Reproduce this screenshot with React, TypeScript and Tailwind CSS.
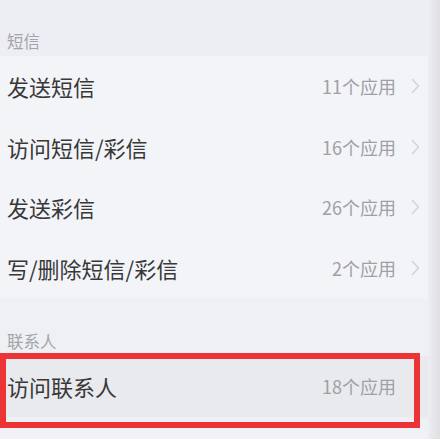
import React from 'react';

interface PermRow {
  label: string;
  count: number;
  arrow?: boolean;
}

const smsRows: PermRow[] = [
  { label: '发送短信', count: 11, arrow: true },
  { label: '访问短信/彩信', count: 16, arrow: true },
  { label: '发送彩信', count: 26, arrow: true },
  { label: '写/删除短信/彩信', count: 2, arrow: true },
];

const font = { fontFamily: '"Noto Sans CJK SC", "Noto Sans", sans-serif' };

function Chevron() {
  return (
    <svg width="9" height="16" viewBox="0 0 9 16" className="ml-[15px] shrink-0">
      <path d="M1.5 1.5 L7.5 8 L1.5 14.5" fill="none" stroke="#d3d4d8" strokeWidth="1.6" strokeLinecap="round" strokeLinejoin="round" />
    </svg>
  );
}

function Row({ row, className = '' }: { row: PermRow; className?: string }) {
  return (
    <div className={`flex h-[60.5px] items-center pl-[7px] pr-[8px] ${className}`}>
      <span className="flex-1 text-[22px] leading-none text-[#383838]">{row.label}</span>
      <span className="text-[18px] leading-none text-[#a0a0a4]">{row.count}个应用</span>
      {row.arrow ? <Chevron /> : <span className="ml-[15px] w-[9px]" />}
    </div>
  );
}

function SectionHeader({ title, h }: { title: string; h: string }) {
  return (
    <div className={`flex items-end pl-[7px] pb-[7px] ${h}`}>
      <span className="text-[16.5px] leading-none text-[#a3a4a8]">{title}</span>
    </div>
  );
}

export default function App() {
  return (
    <div className="flex h-[439px] w-[440px] overflow-hidden bg-[#eef0f4]" style={font}>
      <div className="flex-1">
        <div className="bg-[#eceef3]">
          <SectionHeader title="短信" h="h-[56px]" />
        </div>
        <div className="bg-[#f3f4f8]">
          {smsRows.map((r) => (
            <Row key={r.label} row={r} />
          ))}
        </div>
        <SectionHeader title="联系人" h="h-[58px]" />
        <div className="relative">
          <Row row={{ label: '访问联系人', count: 18 }} className="bg-[#e9eaee]" />
          <div className="pointer-events-none absolute left-0 right-[8px] top-[-3px] bottom-[-11px] border-[6px] border-[#ec3336]" />
        </div>
        <div className="h-[12px]" />
        <Row row={{ label: '修改联系人', count: 9, arrow: true }} className="bg-[#f3f4f8] opacity-40" />
      </div>
      <div className="w-[12px] bg-gradient-to-r from-[#eceef2] to-[#dfe0e4]" />
    </div>
  );
}
